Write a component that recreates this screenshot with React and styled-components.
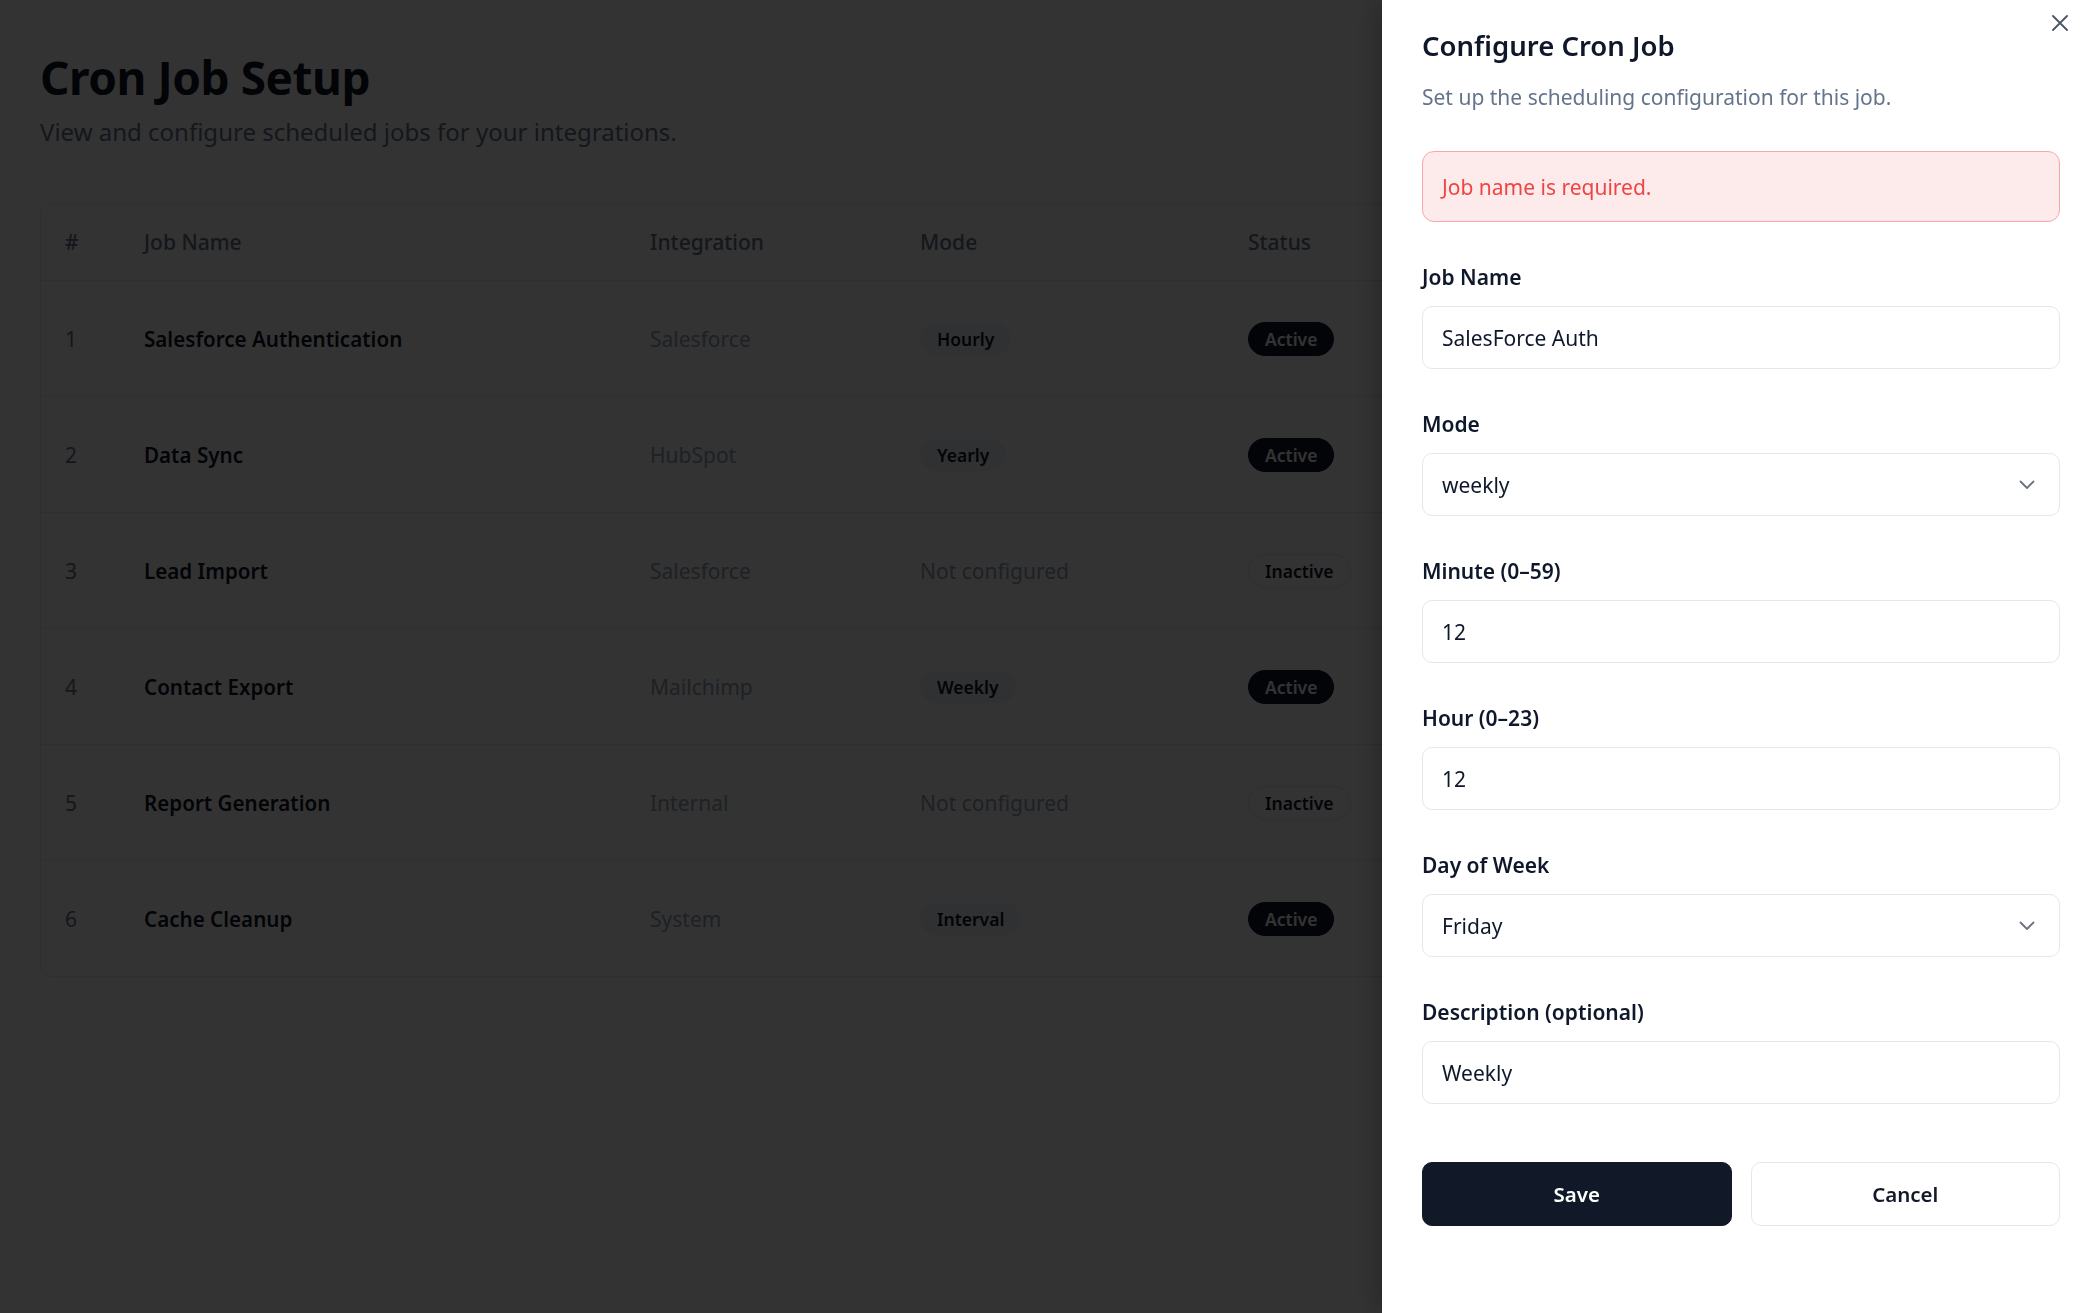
import React from 'react';
import styled, { createGlobalStyle } from 'styled-components';

const GlobalStyle = createGlobalStyle`
  * { box-sizing: border-box; }
  body {
    margin: 0;
    background: #ffffff;
    font-family: "Noto Sans", "Open Sans", Arial, sans-serif;
    color: #0f172a;
  }
`;

const jobs = [
  { id: 1, name: 'Salesforce Authentication', integration: 'Salesforce', mode: 'Hourly', active: true },
  { id: 2, name: 'Data Sync', integration: 'HubSpot', mode: 'Yearly', active: true },
  { id: 3, name: 'Lead Import', integration: 'Salesforce', mode: null, active: false },
  { id: 4, name: 'Contact Export', integration: 'Mailchimp', mode: 'Weekly', active: true },
  { id: 5, name: 'Report Generation', integration: 'Internal', mode: null, active: false },
  { id: 6, name: 'Cache Cleanup', integration: 'System', mode: 'Interval', active: true },
];

const Page = styled.main`
  min-height: 100vh;
  padding: 49px 40px 52px;
`;

const Title = styled.h1`
  margin: 0;
  font-size: 46px;
  line-height: 56px;
  font-weight: 700;
  color: #0f172a;
  letter-spacing: -0.01em;
`;

const Subtitle = styled.p`
  margin: 9px 0 0;
  font-size: 24px;
  line-height: 36px;
  color: #64748b;
`;

const TableCard = styled.div`
  margin-top: 53px;
  border: 1px solid #e2e8f0;
  border-radius: 12px;
  overflow: hidden;
`;

const Row = styled.div`
  display: grid;
  grid-template-columns: 79px 506px 270px 328px 1fr;
  height: ${({ header }) => (header ? '76px' : '116px')};
  border-top: ${({ header }) => (header ? 'none' : '1px solid #e2e8f0')};
`;

const Cell = styled.div`
  display: flex;
  align-items: center;
  padding-left: 24px;
  font-size: ${({ tone }) => (tone === 'strong' ? '20.6px' : '21px')};
  color: ${({ tone }) =>
    tone === 'strong' ? '#0f172a' : tone === 'faint' ? '#94a3b8' : '#64748b'};
  font-weight: ${({ tone }) => (tone === 'strong' ? 600 : 400)};
`;

const HeadCell = styled(Cell)`
  font-weight: 500;
  color: #64748b;
`;

const ModeBadge = styled.span`
  display: inline-flex;
  align-items: center;
  height: 32px;
  padding: 0 17px;
  border-radius: 999px;
  background: #f1f5f9;
  color: #0f172a;
  font-size: 17.5px;
  font-weight: 600;
`;

const StatusBadge = styled.span`
  display: inline-flex;
  align-items: center;
  height: 34px;
  padding: 0 16px;
  border-radius: 999px;
  border: 1px solid ${({ active }) => (active ? '#0f172a' : '#e2e8f0')};
  background: ${({ active }) => (active ? '#0f172a' : '#ffffff')};
  color: ${({ active }) => (active ? '#ffffff' : '#0f172a')};
  font-size: 17.5px;
  font-weight: 600;
`;

const Overlay = styled.div`
  position: fixed;
  inset: 0;
  background: rgba(0, 0, 0, 0.8);
`;

const Drawer = styled.aside`
  position: fixed;
  top: 0;
  right: 0;
  bottom: 0;
  width: 716px;
  background: #ffffff;
  padding: 26px 38px 0 40px;
  box-shadow: -6px 0 24px rgba(0, 0, 0, 0.25);
  display: flex;
  flex-direction: column;
`;

const CloseButton = styled.button`
  position: absolute;
  top: 13px;
  right: 28px;
  width: 20px;
  height: 20px;
  padding: 0;
  border: none;
  background: none;
  color: #4b5563;
  display: flex;
  align-items: center;
  justify-content: center;
  cursor: pointer;
`;

const DrawerTitle = styled.h2`
  margin: 0;
  font-size: 27.5px;
  line-height: 40px;
  font-weight: 600;
  color: #0f172a;
`;

const DrawerSubtitle = styled.p`
  margin: 15px 0 0;
  font-size: 21px;
  line-height: 32px;
  color: #64748b;
`;

const Alert = styled.div`
  margin-top: 38px;
  height: 71px;
  display: flex;
  align-items: center;
  padding: 0 19px;
  border: 1px solid #fca5a5;
  border-radius: 12px;
  background: #fdeaea;
  color: #ef4444;
  font-size: 21px;
`;

const Form = styled.form`
  margin-top: 40px;
  display: flex;
  flex-direction: column;
  gap: 40px;
`;

const Field = styled.div`
  display: flex;
  flex-direction: column;
  gap: 14px;
`;

const Label = styled.label`
  font-size: 21px;
  line-height: 30px;
  font-weight: 600;
  color: #0f172a;
`;

const Input = styled.input`
  height: 63px;
  width: 100%;
  padding: 0 19px;
  border: 1px solid #e2e8f0;
  border-radius: 10px;
  background: #ffffff;
  font: inherit;
  font-size: 21px;
  color: #0f172a;
  outline: none;
`;

const SelectTrigger = styled.button`
  height: 63px;
  width: 100%;
  padding: 0 24px 0 19px;
  border: 1px solid #e2e8f0;
  border-radius: 10px;
  background: #ffffff;
  font: inherit;
  font-size: 21px;
  color: #0f172a;
  display: flex;
  align-items: center;
  justify-content: space-between;
  text-align: left;
`;

const Actions = styled.div`
  margin-top: 58px;
  display: grid;
  grid-template-columns: 1fr 1fr;
  gap: 19px;
`;

const Button = styled.button`
  height: 64px;
  border-radius: 10px;
  font: inherit;
  font-size: 20.5px;
  font-weight: 600;
  border: 1px solid ${({ primary }) => (primary ? '#111827' : '#e2e8f0')};
  background: ${({ primary }) => (primary ? '#111827' : '#ffffff')};
  color: ${({ primary }) => (primary ? '#ffffff' : '#111827')};
  cursor: pointer;
`;

const Chevron = () => (
  <svg width="16" height="10" viewBox="0 0 16 10" fill="none">
    <polyline points="1.5,1.5 8,8 14.5,1.5" stroke="#6b7280" strokeWidth="1.8" strokeLinecap="round" strokeLinejoin="round" />
  </svg>
);

const SelectField = ({ label, value }) => (
  <Field>
    <Label>{label}</Label>
    <SelectTrigger type="button">
      <span>{value}</span>
      <Chevron />
    </SelectTrigger>
  </Field>
);

const TextField = ({ label, value }) => (
  <Field>
    <Label>{label}</Label>
    <Input defaultValue={value} />
  </Field>
);

export default function App() {
  return (
    <>
      <GlobalStyle />
      <Page>
        <Title>Cron Job Setup</Title>
        <Subtitle>View and configure scheduled jobs for your integrations.</Subtitle>

        <TableCard>
          <Row header>
            <HeadCell>#</HeadCell>
            <HeadCell>Job Name</HeadCell>
            <HeadCell>Integration</HeadCell>
            <HeadCell>Mode</HeadCell>
            <HeadCell>Status</HeadCell>
          </Row>
          {jobs.map((job) => (
            <Row key={job.id}>
              <Cell>{job.id}</Cell>
              <Cell tone="strong">{job.name}</Cell>
              <Cell tone="faint">{job.integration}</Cell>
              <Cell tone="faint">
                {job.mode ? <ModeBadge>{job.mode}</ModeBadge> : 'Not configured'}
              </Cell>
              <Cell>
                <StatusBadge active={job.active}>{job.active ? 'Active' : 'Inactive'}</StatusBadge>
              </Cell>
            </Row>
          ))}
        </TableCard>
      </Page>

      <Overlay />

      <Drawer>
        <CloseButton type="button" aria-label="Close">
          <svg width="16" height="16" viewBox="0 0 16 16" fill="none">
            <path d="M1 1L15 15M15 1L1 15" stroke="currentColor" strokeWidth="1.8" strokeLinecap="round" />
          </svg>
        </CloseButton>

        <DrawerTitle>Configure Cron Job</DrawerTitle>
        <DrawerSubtitle>Set up the scheduling configuration for this job.</DrawerSubtitle>

        <Alert>Job name is required.</Alert>

        <Form onSubmit={(e) => e.preventDefault()}>
          <TextField label="Job Name" value="SalesForce Auth" />
          <SelectField label="Mode" value="weekly" />
          <TextField label="Minute (0–59)" value="12" />
          <TextField label="Hour (0–23)" value="12" />
          <SelectField label="Day of Week" value="Friday" />
          <TextField label="Description (optional)" value="Weekly" />
        </Form>

        <Actions>
          <Button primary type="button">Save</Button>
          <Button type="button">Cancel</Button>
        </Actions>
      </Drawer>
    </>
  );
}
